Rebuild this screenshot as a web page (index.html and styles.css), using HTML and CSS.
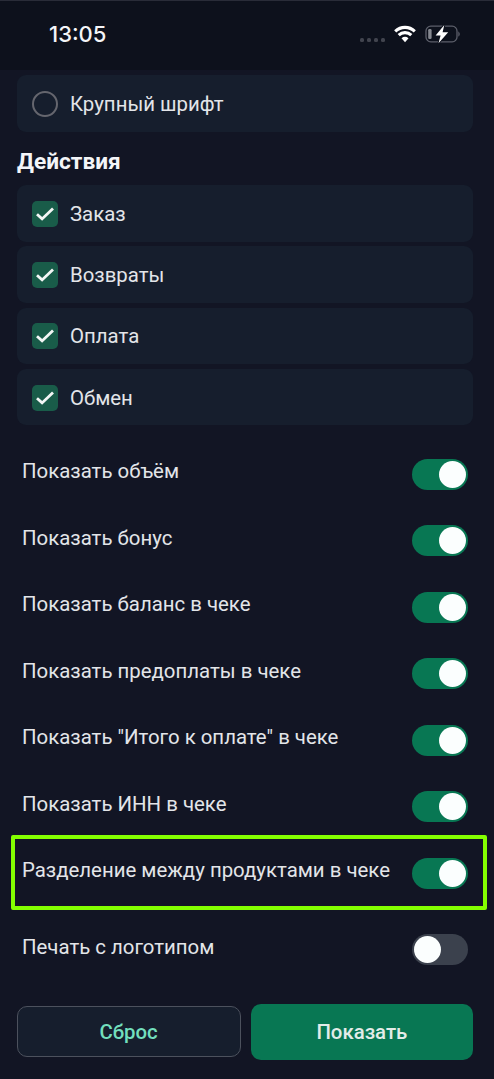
FILE: index.html
```html
<!DOCTYPE html>
<html lang="ru">
<head>
<meta charset="utf-8">
<title>Настройки чека</title>
<link rel="stylesheet" href="styles.css">
</head>
<body>
<header class="status">
  <span class="time">13:05</span>
  <div class="indicators">
    <span class="dots"><i></i><i></i><i></i><i></i></span>
    <svg class="wifi" width="22" height="18" viewBox="0 0 22 18"><g fill="none" stroke="#fff" stroke-width="3.1"><path d="M1.2 6.3C6.8 1 15.2 1 20.8 6.3"/><path d="M4.7 10.1C8.2 6.8 13.8 6.8 17.3 10.1"/></g><path fill="#fff" d="M7.5 13.2q3.5-2.9 7 0L11 17.2z"/></svg>
    <svg class="battery" width="36" height="20" viewBox="0 0 36 20"><rect x="1" y="2.2" width="31" height="15.6" rx="4.8" fill="none" stroke="#5c5f6a" stroke-width="1.3"/><path d="M33.3 7.2q3 2.8 0 5.6z" fill="#5c5f6a"/><rect x="3.2" y="5" width="3.4" height="10" rx="1.3" fill="#858890"/><path d="M19.3 1 10.6 11.5h5L13.5 19.2l9.7-11h-5.6z" fill="#fff" stroke="#0d111c" stroke-width="2" paint-order="stroke"/></svg>
  </div>
</header>
<main class="content">
  <label class="card"><span class="radio"></span>Крупный шрифт</label>
  <h2 class="heading">Действия</h2>
  <div class="cards">
    <label class="card"><svg class="check" viewBox="0 0 26 26"><path d="m5 13.2 5.1 4.7L21 7.5"/></svg>Заказ</label>
    <label class="card"><svg class="check" viewBox="0 0 26 26"><path d="m5 13.2 5.1 4.7L21 7.5"/></svg>Возвраты</label>
    <label class="card"><svg class="check" viewBox="0 0 26 26"><path d="m5 13.2 5.1 4.7L21 7.5"/></svg>Оплата</label>
    <label class="card"><svg class="check" viewBox="0 0 26 26"><path d="m5 13.2 5.1 4.7L21 7.5"/></svg>Обмен</label>
  </div>
  <div class="options">
    <div class="option"><span class="label">Показать объём</span><span class="switch on"></span></div>
    <div class="option"><span class="label">Показать бонус</span><span class="switch on"></span></div>
    <div class="option"><span class="label">Показать баланс в чеке</span><span class="switch on"></span></div>
    <div class="option"><span class="label">Показать предоплаты в чеке</span><span class="switch on"></span></div>
    <div class="option"><span class="label">Показать "Итого к оплате" в чеке</span><span class="switch on"></span></div>
    <div class="option"><span class="label">Показать ИНН в чеке</span><span class="switch on"></span></div>
    <div class="option marked"><span class="label">Разделение между продуктами в чеке</span><span class="switch on"></span></div>
    <div class="option last"><span class="label">Печать с логотипом</span><span class="switch"></span></div>
  </div>
</main>
<footer class="actions">
  <button class="btn reset">Сброс</button>
  <button class="btn show">Показать</button>
</footer>
</body>
</html>
```
FILE: styles.css
```css
* { box-sizing: border-box; }
body {
  margin: 0;
  height: 1079px;
  overflow: hidden;
  background: #121524;
  color: #e3e5e9;
  font: 400 20.4px/24px Roboto, sans-serif;
}
.status {
  height: 70px;
  padding: 0 33px 3px 49px;
  border-top: 1px solid #292c38;
  background: #0d111c;
  display: flex;
  align-items: center;
  justify-content: space-between;
}
.time { font: 500 22px/26px Inter, sans-serif; color: #f4f5f7; }
.indicators { display: flex; align-items: center; }
.dots { display: flex; gap: 3px; margin: 11px 9px 0 0; }
.dots i { width: 4px; height: 4px; border-radius: 1.5px; background: #41444e; }
.battery { margin-left: 9px; }
.content { padding: 5px 21px 0 17px; }
.card {
  width: 456px;
  height: 56.5px;
  padding: 1px 0 0 14.5px;
  border-radius: 9px;
  background: #161e2d;
  display: flex;
  align-items: center;
  gap: 12.5px;
}
.radio { width: 26px; height: 26px; border: 2px solid #65666e; border-radius: 50%; }
.heading { margin: 18px 0 11.5px; font-size: 22.7px; line-height: 24px; font-weight: 700; color: #f4f5f8; }
.cards { display: flex; flex-direction: column; gap: 4.8px; }
.check { width: 26px; height: 26px; border-radius: 5px; background: #195c49; }
.check path { fill: none; stroke: #f3f6f5; stroke-width: 2.8; }
.options { padding: 15.5px 5px 0; width: 456px; }
.option { position: relative; height: 66.5px; display: flex; align-items: center; justify-content: space-between; }
.label { margin-bottom: 6px; white-space: nowrap; }
.switch { width: 56px; height: 31px; padding: 2px; border-radius: 16px; background: #3b414d; display: flex; }
.switch::before { content: ""; width: 27px; height: 27px; border-radius: 50%; background: #fbfefe; }
.switch.on { background: #087753; justify-content: flex-end; }
.marked::after {
  content: "";
  position: absolute;
  inset: -5px -19px -4px -11px;
  border: 4px solid #84ff00;
  border-radius: 2px;
}
.last { margin-top: 10px; }
.actions { display: flex; align-items: center; gap: 10px; margin-top: 21px; padding: 0 21px 0 16.5px; height: 56px; }
.btn { flex: 1; border: 0; border-radius: 10px; padding: 1px 0 0; font: 500 20.4px/24px Roboto, sans-serif; }
.reset { height: 51px; background: #161e2d; border: 1px solid #4c515d; color: #72dfbd; }
.show { height: 56px; background: #087753; color: #e3ece8; }
```
